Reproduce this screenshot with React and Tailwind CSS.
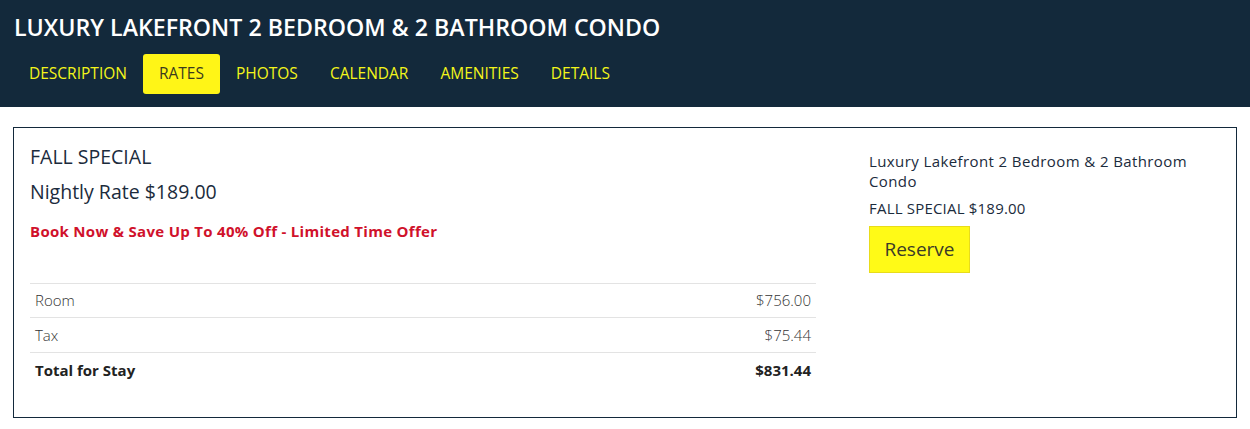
export default function App() {
    const tabs = ['DESCRIPTION', 'RATES', 'PHOTOS', 'CALENDAR', 'AMENITIES', 'DETAILS'];
    const rows = [
        { label: 'Room', amount: '$756.00' },
        { label: 'Tax', amount: '$75.44' },
    ];

    return (
        <div className="min-h-screen bg-white text-[#1b2b3c]" style={{ fontFamily: '"Open Sans", "Noto Sans", sans-serif' }}>
            {/* Header */}
            <div className="bg-[#13293b] h-[107px] px-[14px] pt-[12px]">
                <h1 className="text-white text-[23.2px] font-semibold leading-[30px]">
                    LUXURY LAKEFRONT 2 BEDROOM &amp; 2 BATHROOM CONDO
                </h1>
                <div className="flex mt-[12px] ml-[-1px]">
                    {tabs.map((t) => (
                        <div
                            key={t}
                            className={
                                t === 'RATES'
                                    ? 'h-[40px] px-[16px] flex items-center rounded-[3px] bg-[#fff517] text-[#3b3b1e] text-[15.5px]'
                                    : 'h-[40px] px-[16px] flex items-center text-[#f3f51a] text-[15.5px]'
                            }
                        >
                            {t}
                        </div>
                    ))}
                </div>
            </div>

            {/* Rates box */}
            <div className="px-[13px] pt-[20px]">
                <div className="border border-[#13293b] h-[291px] pl-[16px] pr-[16px] pt-[17px] flex">
                    <div className="w-[786px]">
                        <div className="text-[19.5px] leading-[24px]">FALL SPECIAL</div>
                        <div className="text-[19.5px] leading-[26px] mt-[10px]">Nightly Rate $189.00</div>
                        <div className="text-[15px] font-bold text-[#d0112b] mt-[15px] tracking-[0.3px]">
                            Book Now &amp; Save Up To 40% Off - Limited Time Offer
                        </div>
                        <div className="mt-[40px] border-t border-[#e3e3e3]">
                            {rows.map((r) => (
                                <div key={r.label} className="flex justify-between items-center h-[34.5px] px-[5px] border-b border-[#e3e3e3] text-[15px] font-light text-[#333]">
                                    <span>{r.label}</span>
                                    <span>{r.amount}</span>
                                </div>
                            ))}
                            <div className="flex justify-between items-center h-[36px] px-[5px] text-[15px] font-bold text-[#222]">
                                <span>Total for Stay</span>
                                <span>$831.44</span>
                            </div>
                        </div>
                    </div>
                    <div className="ml-[53px] w-[340px] pt-[6px]">
                        <div className="text-[15px] leading-[20px] tracking-[0.4px]">Luxury Lakefront 2 Bedroom &amp; 2 Bathroom Condo</div>
                        <div className="text-[15px] leading-[20px] mt-[7px] tracking-[0.2px]">FALL SPECIAL $189.00</div>
                        <button className="mt-[8px] h-[47px] w-[101px] bg-[#fffa17] border border-[#e8dc1a] text-[19px] text-[#3a3a28]">
                            Reserve
                        </button>
                    </div>
                </div>
            </div>
        </div>
    );
}
